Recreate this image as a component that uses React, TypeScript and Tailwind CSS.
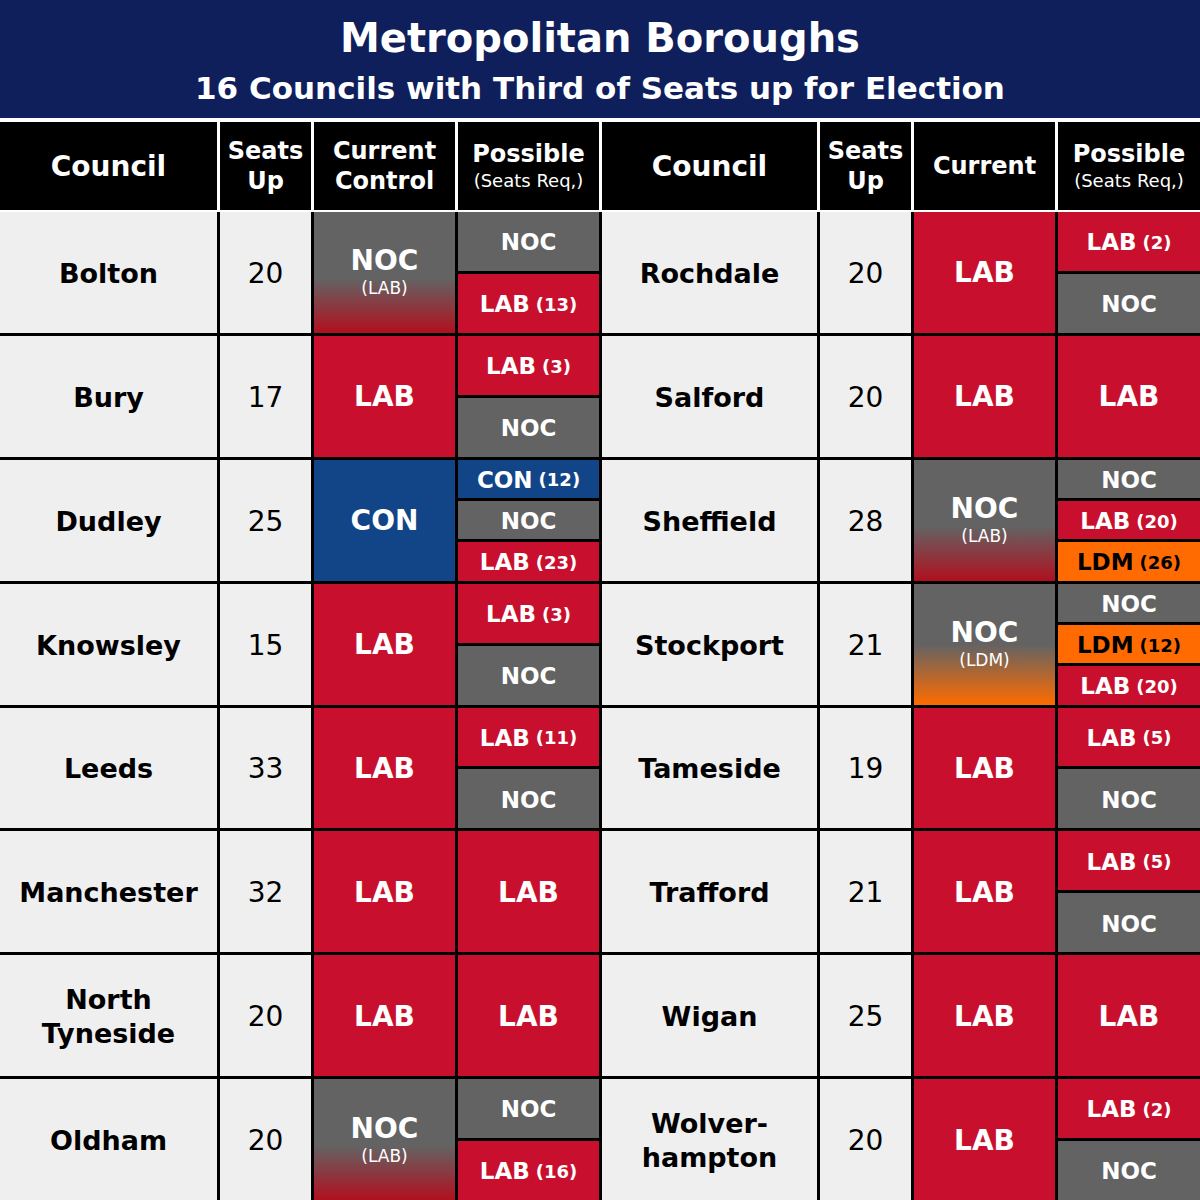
import React from "react";

type Party = "LAB" | "NOC" | "CON" | "LDM";

interface Pick {
  party: Party;
  seats?: number;
}

interface Council {
  name: string[];
  seats: number;
  current: Party;
  lean?: "LAB" | "LDM";
  possible: Pick[];
}

const left: Council[] = [
  { name: ["Bolton"], seats: 20, current: "NOC", lean: "LAB", possible: [{ party: "NOC" }, { party: "LAB", seats: 13 }] },
  { name: ["Bury"], seats: 17, current: "LAB", possible: [{ party: "LAB", seats: 3 }, { party: "NOC" }] },
  { name: ["Dudley"], seats: 25, current: "CON", possible: [{ party: "CON", seats: 12 }, { party: "NOC" }, { party: "LAB", seats: 23 }] },
  { name: ["Knowsley"], seats: 15, current: "LAB", possible: [{ party: "LAB", seats: 3 }, { party: "NOC" }] },
  { name: ["Leeds"], seats: 33, current: "LAB", possible: [{ party: "LAB", seats: 11 }, { party: "NOC" }] },
  { name: ["Manchester"], seats: 32, current: "LAB", possible: [{ party: "LAB" }] },
  { name: ["North", "Tyneside"], seats: 20, current: "LAB", possible: [{ party: "LAB" }] },
  { name: ["Oldham"], seats: 20, current: "NOC", lean: "LAB", possible: [{ party: "NOC" }, { party: "LAB", seats: 16 }] },
];

const right: Council[] = [
  { name: ["Rochdale"], seats: 20, current: "LAB", possible: [{ party: "LAB", seats: 2 }, { party: "NOC" }] },
  { name: ["Salford"], seats: 20, current: "LAB", possible: [{ party: "LAB" }] },
  { name: ["Sheffield"], seats: 28, current: "NOC", lean: "LAB", possible: [{ party: "NOC" }, { party: "LAB", seats: 20 }, { party: "LDM", seats: 26 }] },
  { name: ["Stockport"], seats: 21, current: "NOC", lean: "LDM", possible: [{ party: "NOC" }, { party: "LDM", seats: 12 }, { party: "LAB", seats: 20 }] },
  { name: ["Tameside"], seats: 19, current: "LAB", possible: [{ party: "LAB", seats: 5 }, { party: "NOC" }] },
  { name: ["Trafford"], seats: 21, current: "LAB", possible: [{ party: "LAB", seats: 5 }, { party: "NOC" }] },
  { name: ["Wigan"], seats: 25, current: "LAB", possible: [{ party: "LAB" }] },
  { name: ["Wolver-", "hampton"], seats: 20, current: "LAB", possible: [{ party: "LAB", seats: 2 }, { party: "NOC" }] },
];

const partyBg: Record<Party, string> = {
  LAB: "bg-[#c8102e] text-white",
  NOC: "bg-[#636363] text-white",
  CON: "bg-[#114588] text-white",
  LDM: "bg-[#ff6b00] text-black",
};

function Current({ c }: { c: Council }) {
  if (c.current === "NOC") {
    const grad =
      c.lean === "LDM"
        ? "bg-[linear-gradient(to_bottom,#636363_0%,#636363_50%,#ff6b00_100%)]"
        : "bg-[linear-gradient(to_bottom,#636363_0%,#636363_55%,#b0101f_100%)]";
    return (
      <div className={`flex flex-col items-center justify-center pt-[2px] text-white ${grad}`}>
        <span className="text-[28px] font-bold leading-[30px]">NOC</span>
        <span className="text-[17px] leading-[24px]">({c.lean})</span>
      </div>
    );
  }
  return (
    <div className={`flex items-center justify-center pt-[2px] text-[28px] font-bold ${partyBg[c.current]}`}>
      {c.current}
    </div>
  );
}

function Possible({ c }: { c: Council }) {
  const single = c.possible.length === 1;
  return (
    <div className="flex flex-col gap-[3px] bg-black">
      {c.possible.map((p, i) => (
        <div
          key={i}
          className={`flex flex-1 items-center justify-center gap-[6px] pt-[2px] ${partyBg[p.party]} ${
            single ? "text-[28px]" : "text-[23px]"
          } font-bold`}
        >
          <span>{p.party}</span>
          {p.seats !== undefined && <span className="text-[18px] font-semibold">({p.seats})</span>}
        </div>
      ))}
    </div>
  );
}

function Cells({ c }: { c: Council }) {
  return (
    <>
      <div className="flex flex-col items-center justify-center bg-[#efefef] pt-[3px] text-[27px] font-bold leading-[34px] text-black">
        {c.name.map((n) => (
          <span key={n}>{n}</span>
        ))}
      </div>
      <div className="flex items-center justify-center bg-[#efefef] pt-[3px] text-[28px] font-medium text-black">
        {c.seats}
      </div>
      <Current c={c} />
      <Possible c={c} />
    </>
  );
}

function HeaderCells({ current }: { current: string[] }) {
  return (
    <>
      <div className="flex items-center justify-center bg-black pt-[2px] text-[28px] font-bold">Council</div>
      <div className="flex flex-col items-center justify-center bg-black text-[24px] font-bold leading-[30px]">
        <span>Seats</span>
        <span>Up</span>
      </div>
      <div className="flex flex-col items-center justify-center bg-black text-[24px] font-bold leading-[30px]">
        {current.map((t) => (
          <span key={t}>{t}</span>
        ))}
      </div>
      <div className="flex flex-col items-center justify-center bg-black">
        <span className="text-[24px] font-bold leading-[30px]">Possible</span>
        <span className="text-[18px] leading-[24px]">(Seats Req,)</span>
      </div>
    </>
  );
}

const cols = "grid-cols-[217px_91px_141px_141px_215px_91px_141px_142px]";

export default function App() {
  return (
    <div className="flex h-[1200px] w-[1200px] flex-col bg-white font-['DejaVu_Sans',sans-serif]">
      <div className="flex h-[118px] flex-col items-center justify-center bg-[#0f1f5c] pt-[10px] text-white">
        <h1 className="text-[40px] font-bold leading-[48px]">Metropolitan Boroughs</h1>
        <h2 className="text-[31px] font-bold leading-[52px]">16 Councils with Third of Seats up for Election</h2>
      </div>
      <div className={`mt-[4px] grid h-[88px] ${cols} gap-[3px] bg-white text-white`}>
        <HeaderCells current={["Current", "Control"]} />
        <HeaderCells current={["Current"]} />
      </div>
      <div className={`mt-[2px] grid flex-1 ${cols} grid-rows-8 gap-[3px] bg-black`}>
        {left.map((c, i) => (
          <React.Fragment key={c.name.join()}>
            <Cells c={c} />
            <Cells c={right[i]} />
          </React.Fragment>
        ))}
      </div>
    </div>
  );
}
